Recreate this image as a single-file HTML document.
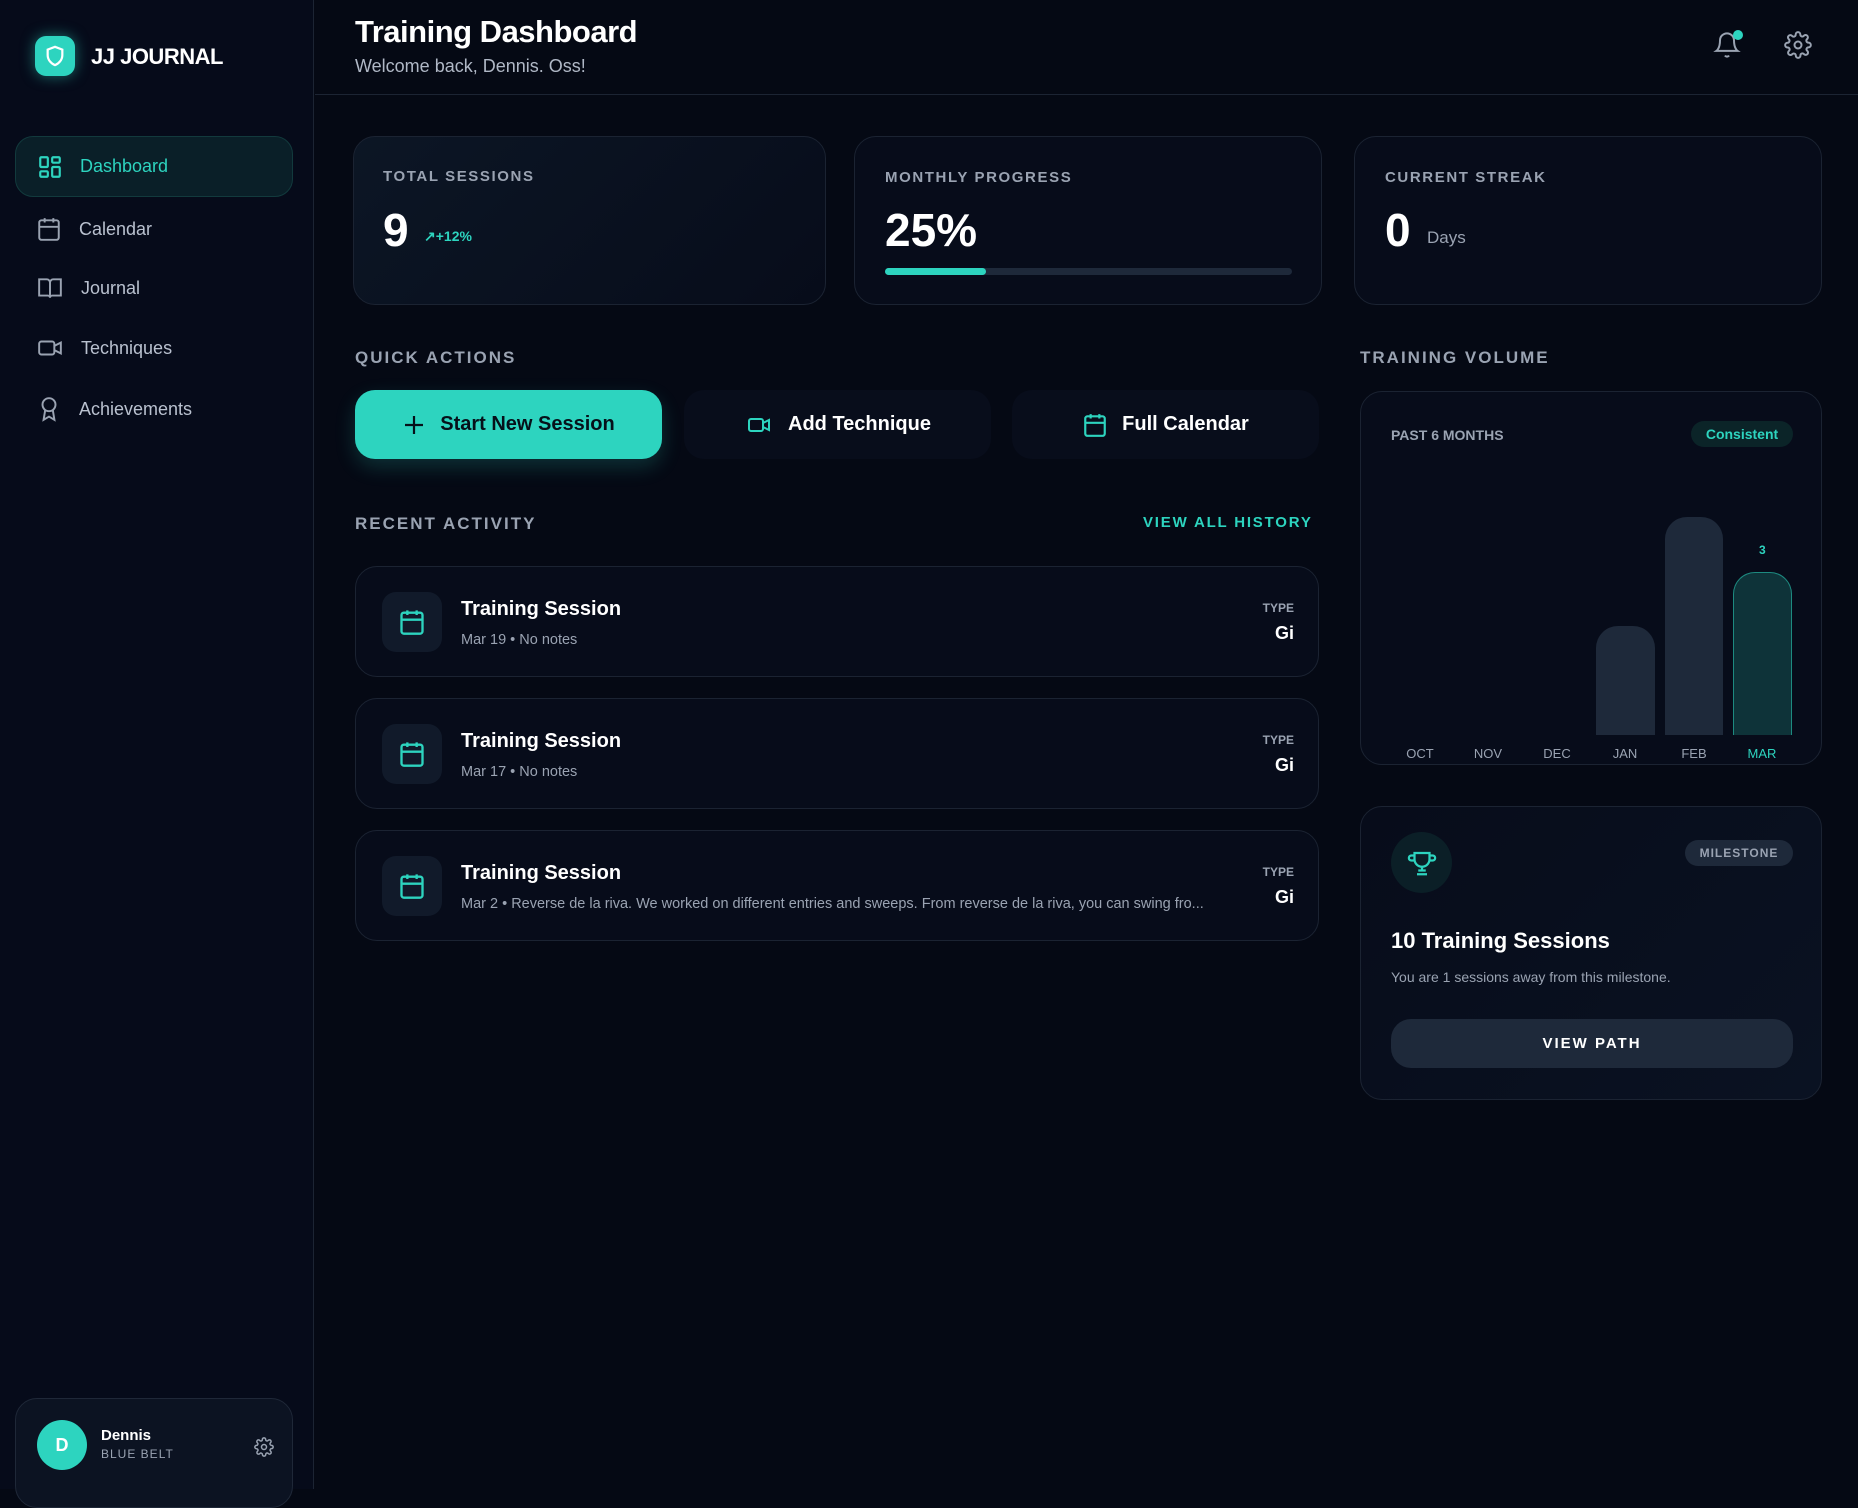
<!DOCTYPE html>
<html><head><meta charset="utf-8"><style>
*{box-sizing:border-box;margin:0;padding:0}
body{width:1858px;height:1489px;background:#050914;font-family:"Liberation Sans",sans-serif;color:#fff;position:relative;overflow:hidden}
.a{position:absolute}
.side{left:0;top:0;width:314px;height:1489px;background:#060b1a;border-right:1px solid #1c2433}
.nav{left:15px;width:278px;height:60px;display:flex;align-items:center;padding-left:21px;font-size:18px;color:#b9c1cf}
.nav svg{margin-right:17px}
.lbl{font-size:17px;font-weight:bold;letter-spacing:2px;color:#9aa3b2}
.card{border:1px solid #1b2332;border-radius:22px;background:#070c1a}
.small{font-size:15px;font-weight:bold;letter-spacing:1.6px;color:#9aa3b2}
.btn{top:390px;height:69px;width:307px;border-radius:20px;background:#080d1b;display:flex;align-items:center;justify-content:center;font-size:20px;font-weight:bold;gap:14px}
.row{left:355px;width:964px;height:111px}
.ic{left:26px;top:25px;width:60px;height:60px;border-radius:14px;background:#111a2a;display:flex;align-items:center;justify-content:center}
.rt{left:105px;top:31px;font-size:20px;font-weight:bold}
.rs{left:105px;top:65px;font-size:14.5px;color:#9aa3b2;white-space:nowrap}
.ty{right:24px;top:34px;font-size:12px;font-weight:bold;color:#9aa3b2}
.gi{right:24px;top:56px;font-size:18px;font-weight:bold}
.bar{background:#1e293a;border-radius:22px 22px 0 0}
.m{font-size:13px;color:#9aa3b2;top:746px;width:60px;text-align:center}
</style></head><body>
<div class="a side">
 <div class="a" style="left:35px;top:36px;width:40px;height:40px;border-radius:11px;background:#2dd4bf;box-shadow:0 0 14px rgba(45,212,191,.5);display:flex;align-items:center;justify-content:center">
  <svg width="22" height="24" viewBox="0 0 24 24" fill="none" stroke="#fff" stroke-width="2.4"><path d="M12 2l8 3v6c0 5-3.5 9-8 11-4.5-2-8-6-8-11V5z"/></svg></div>
 <div class="a" style="left:91px;top:44px;font-size:22px;font-weight:bold;letter-spacing:-0.5px">JJ JOURNAL</div>
 <div class="a nav" style="top:136px;height:61px;background:#0a1f28;border:1px solid #123a3d;border-radius:18px;color:#2dd4bf">
  <svg width="26" height="26" viewBox="0 0 24 24" fill="none" stroke="#2dd4bf" stroke-width="2"><rect x="3" y="3" width="7" height="9" rx="1"/><rect x="14" y="3" width="7" height="5" rx="1"/><rect x="14" y="12" width="7" height="9" rx="1"/><rect x="3" y="16" width="7" height="5" rx="1"/></svg>Dashboard</div>
 <div class="a nav" style="top:199px"><svg width="26" height="26" viewBox="0 0 24 24" fill="none" stroke="#9aa3b2" stroke-width="1.8"><rect x="3" y="4" width="18" height="18" rx="2"/><path d="M16 2v4M8 2v4M3 10h18"/></svg>Calendar</div>
 <div class="a nav" style="top:258px"><svg width="28" height="26" viewBox="0 0 24 24" fill="none" stroke="#9aa3b2" stroke-width="1.8"><path d="M2 4h7a3 3 0 013 3v14a2 2 0 00-2-2H2zM22 4h-7a3 3 0 00-3 3v14a2 2 0 012-2h8z"/></svg>Journal</div>
 <div class="a nav" style="top:318px"><svg width="28" height="26" viewBox="0 0 24 24" fill="none" stroke="#9aa3b2" stroke-width="1.8"><rect x="2" y="6" width="14" height="12" rx="2"/><path d="M16 10l6-3v10l-6-3"/></svg>Techniques</div>
 <div class="a nav" style="top:379px"><svg width="26" height="28" viewBox="0 0 24 24" fill="none" stroke="#9aa3b2" stroke-width="1.8"><circle cx="12" cy="8" r="6"/><path d="M8.5 13L7 22l5-3 5 3-1.5-9"/></svg>Achievements</div>
 <div class="a" style="left:15px;top:1398px;width:278px;height:110px;border:1px solid #1f2838;border-radius:22px;background:#0c1322">
  <div class="a" style="left:21px;top:21px;width:50px;height:50px;border-radius:50%;background:#2dd4bf;display:flex;align-items:center;justify-content:center;font-weight:bold;font-size:18px">D</div>
  <div class="a" style="left:85px;top:28px;font-size:15px;font-weight:bold">Dennis</div>
  <div class="a" style="left:85px;top:48px;font-size:12px;color:#9aa3b2;letter-spacing:1px">BLUE BELT</div>
  <svg class="a" style="left:238px;top:38px" width="20" height="20" viewBox="0 0 24 24" fill="none" stroke="#9aa3b2" stroke-width="1.8"><circle cx="12" cy="12" r="3"/><path d="M19.4 15a1.7 1.7 0 00.3 1.8l.1.1a2 2 0 11-2.8 2.8l-.1-.1a1.7 1.7 0 00-1.8-.3 1.7 1.7 0 00-1 1.5V21a2 2 0 11-4 0v-.1a1.7 1.7 0 00-1.1-1.5 1.7 1.7 0 00-1.8.3l-.1.1a2 2 0 11-2.8-2.8l.1-.1a1.7 1.7 0 00.3-1.8 1.7 1.7 0 00-1.5-1H3a2 2 0 110-4h.1a1.7 1.7 0 001.5-1.1 1.7 1.7 0 00-.3-1.8l-.1-.1a2 2 0 112.8-2.8l.1.1a1.7 1.7 0 001.8.3H9a1.7 1.7 0 001-1.5V3a2 2 0 114 0v.1a1.7 1.7 0 001 1.5 1.7 1.7 0 001.8-.3l.1-.1a2 2 0 112.8 2.8l-.1.1a1.7 1.7 0 00-.3 1.8V9a1.7 1.7 0 001.5 1H21a2 2 0 110 4h-.1a1.7 1.7 0 00-1.5 1z"/></svg>
 </div>
</div>
<div class="a" style="left:315px;top:94px;width:1543px;height:1px;background:#1c2433"></div>
<div class="a" style="left:355px;top:14px;font-size:31px;font-weight:bold;letter-spacing:-0.5px">Training Dashboard</div>
<div class="a" style="left:355px;top:56px;font-size:18px;color:#b0b8c6">Welcome back, Dennis. Oss!</div>
<svg class="a" style="left:1713px;top:30px" width="28" height="30" viewBox="0 0 24 24" fill="none" stroke="#9aa3b2" stroke-width="1.7"><path d="M18 8a6 6 0 00-12 0c0 7-3 9-3 9h18s-3-2-3-9M13.7 21a2 2 0 01-3.4 0"/></svg>
<div class="a" style="left:1733px;top:30px;width:10px;height:10px;border-radius:50%;background:#2dd4bf"></div>
<svg class="a" style="left:1784px;top:31px" width="28" height="28" viewBox="0 0 24 24" fill="none" stroke="#9aa3b2" stroke-width="1.7"><circle cx="12" cy="12" r="3"/><path d="M19.4 15a1.7 1.7 0 00.3 1.8l.1.1a2 2 0 11-2.8 2.8l-.1-.1a1.7 1.7 0 00-1.8-.3 1.7 1.7 0 00-1 1.5V21a2 2 0 11-4 0v-.1a1.7 1.7 0 00-1.1-1.5 1.7 1.7 0 00-1.8.3l-.1.1a2 2 0 11-2.8-2.8l.1-.1a1.7 1.7 0 00.3-1.8 1.7 1.7 0 00-1.5-1H3a2 2 0 110-4h.1a1.7 1.7 0 001.5-1.1 1.7 1.7 0 00-.3-1.8l-.1-.1a2 2 0 112.8-2.8l.1.1a1.7 1.7 0 001.8.3H9a1.7 1.7 0 001-1.5V3a2 2 0 114 0v.1a1.7 1.7 0 001 1.5 1.7 1.7 0 001.8-.3l.1-.1a2 2 0 112.8 2.8l-.1.1a1.7 1.7 0 00-.3 1.8V9a1.7 1.7 0 001.5 1H21a2 2 0 110 4h-.1a1.7 1.7 0 00-1.5 1z"/></svg>

<div class="a card" style="left:353px;top:136px;width:473px;height:169px;background:linear-gradient(135deg,#0c1625,#070c1a)">
 <div class="a small" style="left:29px;top:31px">TOTAL SESSIONS</div>
 <div class="a" style="left:29px;top:66px;font-size:46px;font-weight:bold">9</div>
 <div class="a" style="left:70px;top:91px;font-size:14px;color:#2dd4bf;font-weight:bold">↗+12%</div>
</div>
<div class="a card" style="left:854px;top:136px;width:468px;height:169px">
 <div class="a small" style="left:30px;top:32px">MONTHLY PROGRESS</div>
 <div class="a" style="left:30px;top:66px;font-size:46px;font-weight:bold">25%</div>
 <div class="a" style="left:30px;top:131px;width:407px;height:7px;border-radius:4px;background:#1e293a"><div style="width:101px;height:7px;border-radius:4px;background:#2dd4bf"></div></div>
</div>
<div class="a card" style="left:1354px;top:136px;width:468px;height:169px">
 <div class="a small" style="left:30px;top:32px">CURRENT STREAK</div>
 <div class="a" style="left:30px;top:66px;font-size:46px;font-weight:bold">0</div>
 <div class="a" style="left:72px;top:91px;font-size:17px;color:#9aa3b2">Days</div>
</div>

<div class="a lbl" style="left:355px;top:348px">QUICK ACTIONS</div>
<div class="a lbl" style="left:1360px;top:348px">TRAINING VOLUME</div>
<div class="a btn" style="left:355px;background:#2dd4bf;color:#06111a;box-shadow:0 8px 20px rgba(45,212,191,.2)"><svg width="24" height="24" viewBox="0 0 24 24" stroke="#06111a" stroke-width="2.2"><path d="M12 3v18M3 12h18"/></svg>Start New Session</div>
<div class="a btn" style="left:684px"><svg width="30" height="24" viewBox="0 0 24 24" fill="none" stroke="#2dd4bf" stroke-width="2"><rect x="2" y="6" width="14" height="12" rx="2"/><path d="M16 10l6-3v10l-6-3"/></svg>Add Technique</div>
<div class="a btn" style="left:1012px"><svg width="26" height="28" viewBox="0 0 24 24" fill="none" stroke="#2dd4bf" stroke-width="2"><rect x="3" y="4" width="18" height="18" rx="2"/><path d="M16 2v4M8 2v4M3 10h18M8 14h.01M12 14h.01M16 14h.01M8 18h.01M12 18h.01M16 18h.01"/></svg>Full Calendar</div>

<div class="a lbl" style="left:355px;top:514px">RECENT ACTIVITY</div>
<div class="a" style="left:1143px;top:514px;font-size:15px;font-weight:bold;letter-spacing:1.8px;color:#2dd4bf">VIEW ALL HISTORY</div>

<div class="a card row" style="top:566px"><div class="a ic"><svg width="28" height="28" viewBox="0 0 24 24" fill="none" stroke="#2dd4bf" stroke-width="2"><rect x="3" y="4" width="18" height="18" rx="2"/><path d="M16 2v4M8 2v4M3 10h18"/></svg></div><div class="a rt">Training Session</div><div class="a rs">Mar 19 • No notes</div><div class="a ty">TYPE</div><div class="a gi">Gi</div></div>
<div class="a card row" style="top:698px"><div class="a ic"><svg width="28" height="28" viewBox="0 0 24 24" fill="none" stroke="#2dd4bf" stroke-width="2"><rect x="3" y="4" width="18" height="18" rx="2"/><path d="M16 2v4M8 2v4M3 10h18"/></svg></div><div class="a rt">Training Session</div><div class="a rs">Mar 17 • No notes</div><div class="a ty">TYPE</div><div class="a gi">Gi</div></div>
<div class="a card row" style="top:830px"><div class="a ic"><svg width="28" height="28" viewBox="0 0 24 24" fill="none" stroke="#2dd4bf" stroke-width="2"><rect x="3" y="4" width="18" height="18" rx="2"/><path d="M16 2v4M8 2v4M3 10h18"/></svg></div><div class="a rt">Training Session</div><div class="a rs">Mar 2 • Reverse de la riva. We worked on different entries and sweeps. From reverse de la riva, you can swing fro...</div><div class="a ty">TYPE</div><div class="a gi">Gi</div></div>

<div class="a card" style="left:1360px;top:391px;width:462px;height:374px">
 <div class="a" style="left:30px;top:35px;font-size:14px;font-weight:bold;color:#9aa3b2">PAST 6 MONTHS</div>
 <div class="a" style="left:330px;top:29px;width:102px;height:26px;border-radius:13px;background:#0b2428;color:#2dd4bf;font-size:14px;font-weight:bold;text-align:center;line-height:26px">Consistent</div>
</div>
<div class="a bar" style="left:1596px;top:626px;width:59px;height:109px"></div>
<div class="a bar" style="left:1665px;top:517px;width:58px;height:218px"></div>
<div class="a bar" style="left:1733px;top:572px;width:59px;height:163px;background:#0e3339;border:1px solid #1d8a80;border-bottom:none"></div>
<div class="a" style="left:1759px;top:543px;font-size:12px;font-weight:bold;color:#2dd4bf">3</div>
<div class="a m" style="left:1390px">OCT</div><div class="a m" style="left:1458px">NOV</div><div class="a m" style="left:1527px">DEC</div><div class="a m" style="left:1595px">JAN</div><div class="a m" style="left:1664px">FEB</div><div class="a m" style="left:1732px;color:#2dd4bf">MAR</div>

<div class="a card" style="left:1360px;top:806px;width:462px;height:294px;background:linear-gradient(135deg,#070c1a,#0a1222)">
 <div class="a" style="left:30px;top:25px;width:61px;height:61px;border-radius:50%;background:#0b1f27;display:flex;align-items:center;justify-content:center"><svg width="30" height="30" viewBox="0 0 24 24" fill="none" stroke="#2dd4bf" stroke-width="1.8"><path d="M6 4h12v5a6 6 0 01-12 0zM6 6H3.5a2 2 0 000 4H6M18 6h2.5a2 2 0 010 4H18M12 15v3M8 21h8M9 18h6"/></svg></div>
 <div class="a" style="left:324px;top:33px;width:108px;height:26px;border-radius:13px;background:#1e293a;color:#9aa3b2;font-size:12px;font-weight:bold;letter-spacing:1px;text-align:center;line-height:26px">MILESTONE</div>
 <div class="a" style="left:30px;top:121px;font-size:22px;font-weight:bold">10 Training Sessions</div>
 <div class="a" style="left:30px;top:162px;font-size:14px;color:#9aa3b2">You are 1 sessions away from this milestone.</div>
 <div class="a" style="left:30px;top:212px;width:402px;height:49px;border-radius:20px;background:#1e293a;text-align:center;line-height:49px;font-size:15px;font-weight:bold;letter-spacing:2px">VIEW PATH</div>
</div>
</body></html>
